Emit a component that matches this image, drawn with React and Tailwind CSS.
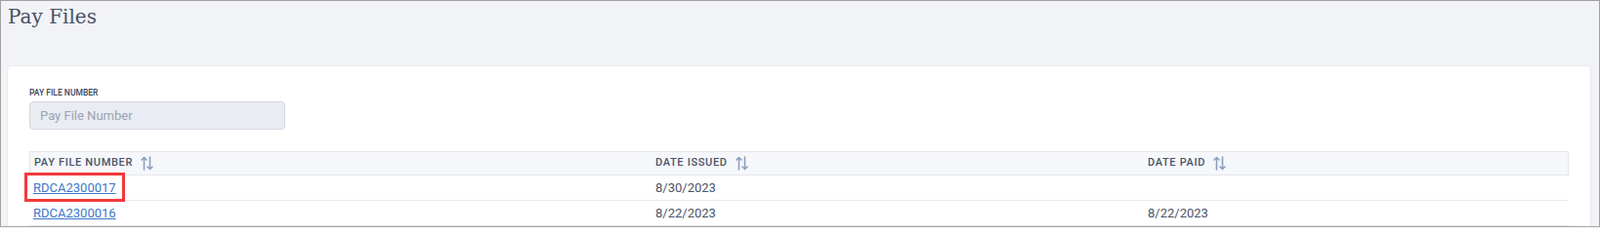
import React from 'react';

const rows = [
  { id: 'RDCA2300017', issued: '8/30/2023', paid: '', marked: true },
  { id: 'RDCA2300016', issued: '8/22/2023', paid: '8/22/2023' },
];

function SortIcon() {
  return (
    <svg width="13" height="15" viewBox="0 0 13 15" className="ml-[8px] text-[#8aa0bf]" fill="none" stroke="currentColor" strokeWidth="1.6" strokeLinecap="round" strokeLinejoin="round">
      <path d="M3.5 14V1.5M1 4l2.5-2.5L6 4" />
      <path d="M9.5 1V13.5M7 11l2.5 2.5L12 11" />
    </svg>
  );
}

export default function App() {
  const sans = { fontFamily: 'Roboto, "Liberation Sans", sans-serif' };
  return (
    <div className="h-[233px] overflow-hidden border border-[#a2a2a2] bg-[#f2f3f6]" style={sans}>
      {/* Title */}
      <div className="pl-[7px] pt-[2px] h-[67px]">
        <h1 className="text-[20px] leading-[28px] text-[#485064]" style={{ fontFamily: '"DejaVu Serif", "Liberation Serif", serif' }}>
          Pay Files
        </h1>
      </div>

      {/* Card */}
      <div className="ml-[7px] mr-[9px] bg-white rounded-[4px] shadow-[0_0_2px_rgba(0,0,0,0.12)] px-[22px] pt-[22px] pb-6">
        <label className="block text-[8.5px] leading-[10px] font-medium text-[#3f4759]">PAY FILE NUMBER</label>
        <input
          placeholder="Pay File Number"
          className="mt-[4px] w-[262px] h-[29px] rounded-[4px] border border-[#d3d8e2] bg-[#e9ecf2] px-[10px] text-[13px] text-[#4b5568] placeholder:text-[#9ba3b4] outline-none"
        />

        <div className="mt-[22px]">
          <div className="grid grid-cols-[636px_504px_1fr] h-[25px] items-center bg-[#f6f7fb] border border-[#e3e6ee] text-[11px] font-medium tracking-[0.06em] text-[#4b5466]">
            <div className="flex items-center pl-[4px]">PAY FILE NUMBER<SortIcon /></div>
            <div className="flex items-center pl-[4px]">DATE ISSUED<SortIcon /></div>
            <div className="flex items-center pl-[4px]">DATE PAID<SortIcon /></div>
          </div>
          {rows.map((r) => (
            <div key={r.id} className="grid grid-cols-[636px_504px_1fr] h-[26px] items-center border-b border-[#e6e8ef] text-[13px] text-[#4b5466]">
              <div className="pl-[4px] flex items-center">
                <span className={r.marked ? 'relative' : ''}>
                  <a href="#" className="underline text-[#3977c8]">{r.id}</a>
                  {r.marked && (
                    <span className="absolute -left-[9px] -right-[9px] -top-[6px] -bottom-[5px] border-[3px] border-[#f2393c]" />
                  )}
                </span>
              </div>
              <div className="pl-[5px]">{r.issued}</div>
              <div className="pl-[5px]">{r.paid}</div>
            </div>
          ))}
        </div>
      </div>
    </div>
  );
}
